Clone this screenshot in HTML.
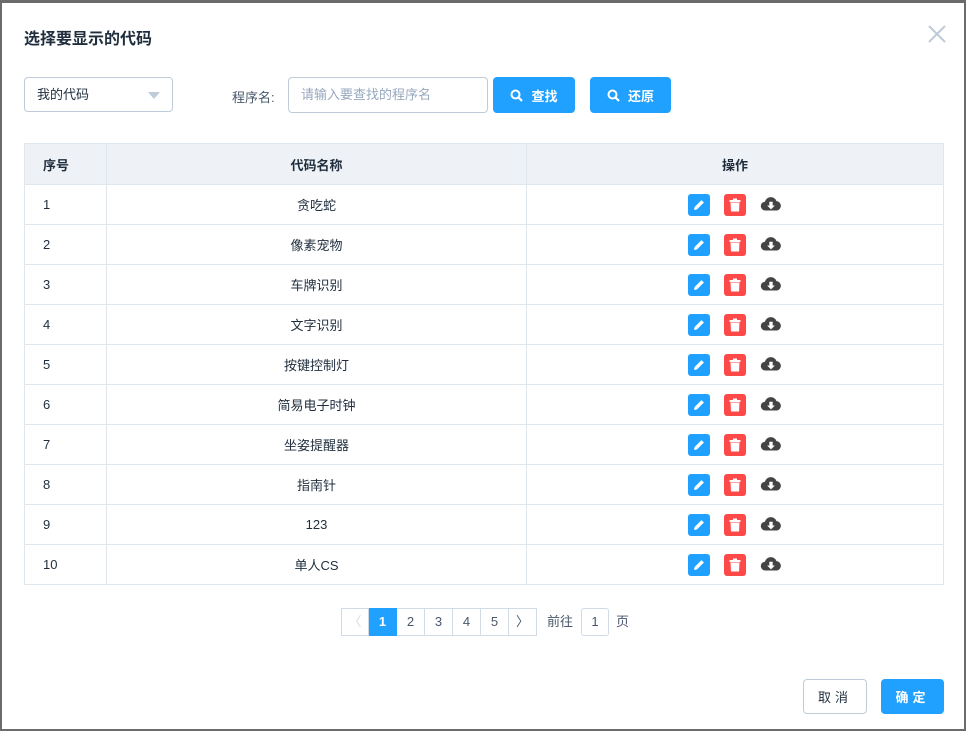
<!DOCTYPE html>
<html><head><meta charset="utf-8"><style>
*{box-sizing:border-box;margin:0;padding:0}
body{width:966px;height:731px;background:#6b6b6b;font-family:"Liberation Sans","Noto Sans CJK SC",sans-serif;position:relative;overflow:hidden;color:#333}
.dlg{position:absolute;left:2px;top:3px;width:962px;height:726px;background:#fff}
.abs{position:absolute}
.title{left:22px;top:22px;font-size:16px;font-weight:600;color:#1f2d3d}
.close{left:924px;top:20px;width:22px;height:22px}
.sel{left:22px;top:74px;width:149px;height:35px;border:1px solid #bfcbd9;border-radius:4px;font-size:13px;padding:0 12px;line-height:33px;color:#1f2d3d}
.sel:after{content:"";position:absolute;right:12px;top:14px;border-left:6px solid transparent;border-right:6px solid transparent;border-top:7px solid #bfcbd9}
.lbl{left:230px;top:84px;font-size:13px;color:#48576a}
.inp{left:286px;top:74px;width:200px;height:36px;border:1px solid #bfcbd9;border-radius:4px;font-size:13px;color:#97a8be;padding-left:12px;line-height:34px}
.btn{height:36px;top:74px;background:#20a0ff;border-radius:4px;color:#fff;font-size:13px;font-weight:bold;display:flex;align-items:center;justify-content:center;gap:8px}
table{position:absolute;left:22px;top:140px;width:920px;border-collapse:collapse;font-size:13px;color:#1f2d3d}
td,th{border:1px solid #dfe6ec;height:40px}
th{background:#eef1f6;font-weight:bold;height:41px}
td:first-child,th:first-child{text-align:left;padding-left:18px;width:82px}
td:nth-child(2),th:nth-child(2){width:420px;text-align:center}
.ops{display:flex;justify-content:center;gap:14px;padding-left:0;align-items:center}
.ic{width:22px;height:22px;border-radius:3px;display:flex;align-items:center;justify-content:center}
.pg{left:339px;top:605px;display:flex;font-size:13px;color:#48576a}
.pg div{width:28px;height:28px;border:1px solid #d1dbe5;border-left:none;text-align:center;line-height:26px}
.pg div:first-child{border-left:1px solid #d1dbe5}
.pg .on{background:#20a0ff;color:#fff;border-color:#20a0ff;font-weight:bold}
.b2{top:676px;height:35px;border-radius:4px;font-size:13px;display:flex;align-items:center;justify-content:center;letter-spacing:4px}
</style></head><body><div class="dlg">
<div class="abs title">选择要显示的代码</div>
<svg class="abs close" viewBox="0 0 22 22"><path d="M3 3L19 19M19 3L3 19" stroke="#bfcbd9" stroke-width="2"/></svg>
<div class="abs sel">我的代码</div>
<div class="abs lbl">程序名:</div>
<div class="abs inp">请输入要查找的程序名</div>
<div class="abs btn" style="left:491px;width:82px"><svg width="13" height="13" viewBox="0 0 13 13"><circle cx="5.5" cy="5.5" r="4" stroke="#fff" stroke-width="2" fill="none"/><path d="M8.5 8.5L12 12" stroke="#fff" stroke-width="2.2"/></svg>查找</div>
<div class="abs btn" style="left:588px;width:81px"><svg width="13" height="13" viewBox="0 0 13 13"><circle cx="5.5" cy="5.5" r="4" stroke="#fff" stroke-width="2" fill="none"/><path d="M8.5 8.5L12 12" stroke="#fff" stroke-width="2.2"/></svg>还原</div>
<table>
<tr><th>序号</th><th>代码名称</th><th>操作</th></tr>
<tr><td>1</td><td>贪吃蛇</td><td class="o"></td></tr>
<tr><td>2</td><td>像素宠物</td><td class="o"></td></tr>
<tr><td>3</td><td>车牌识别</td><td class="o"></td></tr>
<tr><td>4</td><td>文字识别</td><td class="o"></td></tr>
<tr><td>5</td><td>按键控制灯</td><td class="o"></td></tr>
<tr><td>6</td><td>简易电子时钟</td><td class="o"></td></tr>
<tr><td>7</td><td>坐姿提醒器</td><td class="o"></td></tr>
<tr><td>8</td><td>指南针</td><td class="o"></td></tr>
<tr><td>9</td><td>123</td><td class="o"></td></tr>
<tr><td>10</td><td>单人CS</td><td class="o"></td></tr>
</table>
<div class="abs pg"><div style="color:#d1dbe5">〈</div><div class="on">1</div><div>2</div><div>3</div><div>4</div><div>5</div><div>〉</div><span style="margin-left:10px;line-height:28px">前往</span><div style="margin-left:8px;border-radius:3px;border-left:1px solid #d1dbe5">1</div><span style="margin-left:7px;line-height:28px">页</span></div>
<div class="abs b2" style="left:801px;width:64px;border:1px solid #bfcbd9;color:#1f2d3d">取消</div>
<div class="abs b2" style="left:879px;width:63px;background:#20a0ff;color:#fff;font-weight:bold">确定</div>
</div>
<script>
var h='<div class="ops"><div class="ic" style="background:#20a0ff"><svg width="14" height="14" viewBox="0 0 14 14"><path d="M2 12L2.6 9L9.5 2.1L11.9 4.5L5 11.4Z" fill="#fff"/></svg></div><div class="ic" style="background:#ff4949"><svg width="12" height="14" viewBox="0 0 12 14"><rect x="0.5" y="2" width="11" height="2" fill="#fff"/><rect x="4" y="0.5" width="4" height="2.5" fill="#fff"/><path d="M1.5 4.5H10.5L10 13.5H2Z" fill="#fff"/></svg></div><svg width="22" height="18" viewBox="0 0 20 16"><path d="M5 13A4 4 0 0 1 4.5 5A5.5 5.5 0 0 1 15 4.5A4.3 4.3 0 0 1 15.5 13Z" fill="#444"/><path d="M8.5 5H11.5V8.5H13.5L10 12L6.5 8.5H8.5Z" fill="#fff"/></svg></div>';
document.querySelectorAll('.o').forEach(function(e){e.innerHTML=h});
</script>
</body></html>
